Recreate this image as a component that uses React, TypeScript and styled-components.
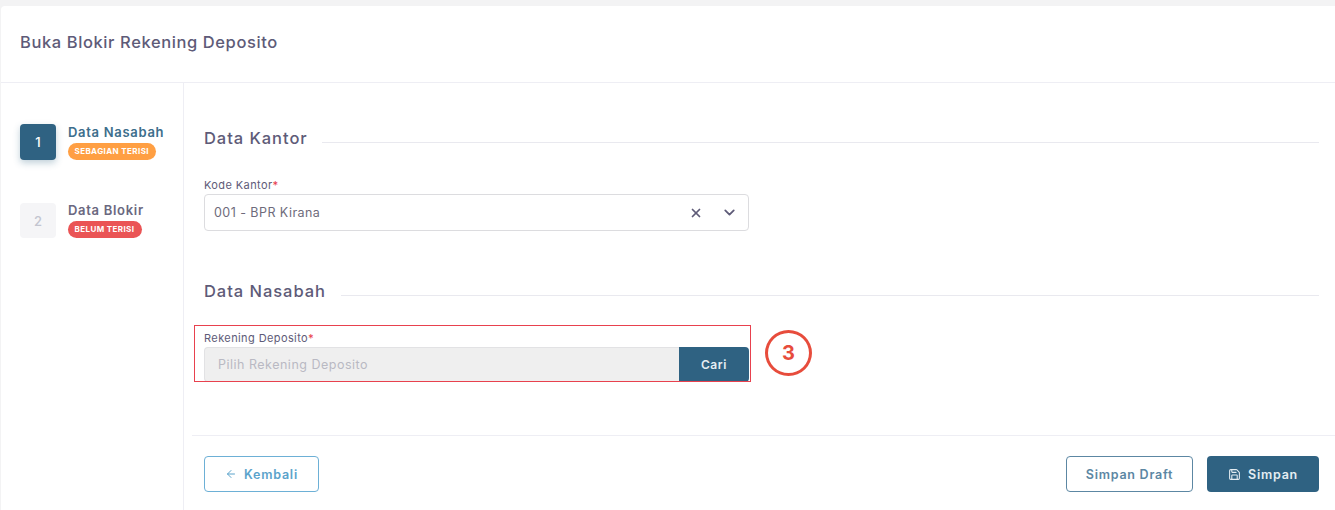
import React from 'react';
import styled, { createGlobalStyle } from 'styled-components';
import { ArrowLeft, ChevronDown, Save, X } from 'lucide-react';

const GlobalStyle = createGlobalStyle`
    html, body {
        margin: 0;
        padding: 0;
        height: 510px;
        overflow: hidden;
        background: #f3f3f4;
    }
    body, button, input {
        font-family: "Inter", "Liberation Sans", sans-serif;
    }
    * { box-sizing: border-box; }
`;

const Page = styled.div`
    padding: 6px 0 0 1px;
    height: 510px;
    overflow: hidden;
`;

const Card = styled.div`
    background: #fff;
    border-radius: 4px 0 0 0;
    height: 504px;
    display: flex;
    flex-direction: column;
`;

const Header = styled.div`
    height: 77px;
    flex: none;
    display: flex;
    align-items: center;
    padding-left: 19px;
    border-bottom: 1px solid #eeeef4;
`;

const Title = styled.h1`
    margin: 0;
    font-size: 16.5px;
    font-weight: 500;
    letter-spacing: 0.6px;
    color: #5e5b78;
    position: relative;
    top: -2px;
`;

const Body = styled.div`
    flex: 1;
    display: flex;
`;

const Sidebar = styled.aside`
    width: 183px;
    flex: none;
    border-right: 1px solid #eeeef4;
    padding: 40px 0 0 19px;
    display: flex;
    flex-direction: column;
    gap: 41px;
`;

const Step = styled.div`
    display: flex;
    gap: 12px;
`;

const StepNum = styled.div<{ $active?: boolean }>`
    width: 36px;
    height: ${p => (p.$active ? 36 : 35)}px;
    margin-top: ${p => (p.$active ? 1 : 2)}px;
    border-radius: 4px;
    display: flex;
    align-items: center;
    justify-content: center;
    font-size: 13px;
    font-weight: 500;
    background: ${p => (p.$active ? '#2f6282' : '#f5f5f7')};
    color: ${p => (p.$active ? '#fff' : '#c3c5d0')};
    box-shadow: ${p => (p.$active ? '0 3px 7px rgba(47, 98, 130, 0.3)' : 'none')};
`;

const StepText = styled.div`
    display: flex;
    flex-direction: column;
    align-items: flex-start;
    gap: 3px;
    padding-top: 1px;
`;

const StepName = styled.div<{ $active?: boolean }>`
    font-size: 13px;
    line-height: 16px;
    font-weight: 600;
    letter-spacing: 0.7px;
    white-space: nowrap;
    color: ${p => (p.$active ? '#3d6e8c' : '#6a6880')};
`;

const Badge = styled.span<{ $bg: string }>`
    height: 17px;
    padding: 0 7.5px 0 6.5px;
    border-radius: 9px;
    background: ${p => p.$bg};
    color: #fff;
    font-size: 8px;
    font-weight: 700;
    line-height: 17px;
    white-space: nowrap;
    letter-spacing: 0.4px;
`;

const Main = styled.main`
    flex: 1;
    min-width: 0;
    display: flex;
    flex-direction: column;
`;

const Form = styled.div`
    height: 352px;
    flex: none;
    padding: 44px 16px 0 20px;
`;

const SectionHead = styled.div<{ $gap: number }>`
    display: flex;
    align-items: center;
    gap: ${p => p.$gap}px;
    height: 22px;
`;

const SectionTitle = styled.h2`
    margin: 0;
    font-size: 16.5px;
    font-weight: 500;
    letter-spacing: 0.95px;
    color: #5e5b78;
    white-space: nowrap;
`;

const SectionLine = styled.div`
    flex: 1;
    height: 1px;
    background: #e9e9ef;
    position: relative;
    top: 4px;
`;

const Field = styled.div`
    position: relative;
    width: 545px;
    margin-top: 30px;
`;

const Label = styled.label`
    display: block;
    font-size: 11px;
    line-height: 13px;
    letter-spacing: 0.4px;
    margin-bottom: 2px;
    color: #5e5b78;

    b {
        color: #e8414e;
        font-weight: 500;
    }
`;

const Select = styled.div`
    height: 37px;
    border: 1px solid #dcdcdf;
    border-radius: 4px;
    display: flex;
    align-items: center;
    padding: 0 10px 0 9px;
    font-size: 12.5px;
    letter-spacing: 0.45px;
    color: #6e6b7b;
`;

const SelectValue = styled.span`
    flex: 1;
`;

const SelectIcons = styled.span`
    display: flex;
    align-items: center;
    gap: 18px;
    color: #5e5b78;
`;

const InputGroup = styled.div`
    display: flex;
    height: 35px;
`;

const Input = styled.input`
    flex: 1;
    min-width: 0;
    height: 100%;
    background: #efefef;
    border: 1px solid #e2e2e4;
    border-right: none;
    border-radius: 4px 0 0 4px;
    padding: 0 13px;
    font-size: 12.5px;
    letter-spacing: 0.5px;
    outline: none;

    &::placeholder {
        color: #b9b9c3;
        opacity: 1;
    }
`;

const SearchButton = styled.button`
    width: 70px;
    height: 100%;
    border: none;
    border-radius: 0 4px 4px 0;
    background: #2f6282;
    color: #e4edf2;
    font-size: 12px;
    font-weight: 600;
    letter-spacing: 0.6px;
`;

const RedFrame = styled.div`
    position: absolute;
    left: -10px;
    top: -7px;
    width: 557px;
    height: 57px;
    border: 1px solid #e8414e;
    pointer-events: none;
`;

const Marker = styled.div`
    position: absolute;
    left: 561px;
    top: -2px;
    width: 47px;
    height: 46px;
    border: 3px solid #e74c3c;
    border-radius: 50%;
    background: #fff;
    color: #e74c3c;
    font-size: 20px;
    font-weight: 700;
    display: flex;
    align-items: center;
    justify-content: center;
`;

const Footer = styled.div`
    margin-left: 8px;
    border-top: 1px solid #eeeef4;
    padding: 20px 16px 0 12px;
    display: flex;
    align-items: flex-start;
`;

const Button = styled.button<{ $variant: 'back' | 'outline' | 'solid'; $w: number }>`
    width: ${p => p.$w}px;
    height: 36px;
    border-radius: 4px;
    display: flex;
    align-items: center;
    justify-content: center;
    gap: 7px;
    font-size: 12.5px;
    font-weight: 600;
    letter-spacing: 0.75px;
    background: ${p => (p.$variant === 'solid' ? '#2f6282' : '#fff')};
    color: ${p =>
        p.$variant === 'back' ? '#5ba3cb' : p.$variant === 'outline' ? '#5c87a3' : '#e4edf2'};
    border: ${p =>
        p.$variant === 'back'
            ? '1px solid #6db0d6'
            : p.$variant === 'outline'
            ? '1px solid #5c87a3'
            : 'none'};
`;

const Spacer = styled.div`
    flex: 1;
`;

const RightButtons = styled.div`
    display: flex;
    gap: 14px;
`;

export default function App() {
    return (
        <Page>
            <GlobalStyle />
            <Card>
                <Header>
                    <Title>Buka Blokir Rekening Deposito</Title>
                </Header>
                <Body>
                    <Sidebar>
                        <Step>
                            <StepNum $active>1</StepNum>
                            <StepText>
                                <StepName $active>Data Nasabah</StepName>
                                <Badge $bg="#ff9f43">SEBAGIAN TERISI</Badge>
                            </StepText>
                        </Step>
                        <Step>
                            <StepNum>2</StepNum>
                            <StepText>
                                <StepName>Data Blokir</StepName>
                                <Badge $bg="#ea5455">BELUM TERISI</Badge>
                            </StepText>
                        </Step>
                    </Sidebar>
                    <Main>
                        <Form>
                            <SectionHead $gap={14}>
                                <SectionTitle>Data Kantor</SectionTitle>
                                <SectionLine />
                            </SectionHead>
                            <Field>
                                <Label>
                                    Kode Kantor<b>*</b>
                                </Label>
                                <Select>
                                    <SelectValue>001 - BPR Kirana</SelectValue>
                                    <SelectIcons>
                                        <X size={14} strokeWidth={3} />
                                        <ChevronDown size={17} strokeWidth={2.5} />
                                    </SelectIcons>
                                </Select>
                            </Field>
                            <SectionHead $gap={15} style={{ marginTop: 49 }}>
                                <SectionTitle>Data Nasabah</SectionTitle>
                                <SectionLine />
                            </SectionHead>
                            <Field>
                                <Label>
                                    Rekening Deposito<b>*</b>
                                </Label>
                                <InputGroup>
                                    <Input placeholder="Pilih Rekening Deposito" readOnly />
                                    <SearchButton>Cari</SearchButton>
                                </InputGroup>
                                <RedFrame />
                                <Marker>3</Marker>
                            </Field>
                        </Form>
                        <Footer>
                            <Button $variant="back" $w={115}>
                                <ArrowLeft size={12} />
                                Kembali
                            </Button>
                            <Spacer />
                            <RightButtons>
                                <Button $variant="outline" $w={127}>
                                    Simpan Draft
                                </Button>
                                <Button $variant="solid" $w={112}>
                                    <Save size={13} />
                                    Simpan
                                </Button>
                            </RightButtons>
                        </Footer>
                    </Main>
                </Body>
            </Card>
        </Page>
    );
}
